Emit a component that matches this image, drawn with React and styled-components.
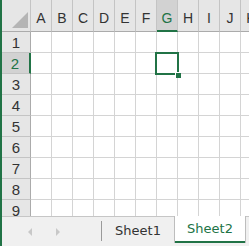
import React from "react";
import styled, { createGlobalStyle } from "styled-components";

const GREEN = "#217346";
const COLS = ["A", "B", "C", "D", "E", "F", "G", "H", "I", "J", "K"];
const ROWS = [1, 2, 3, 4, 5, 6, 7, 8, 9];
const SEL = { col: "G", row: 2 };

const GlobalStyle = createGlobalStyle`
  html, body {
    margin: 0;
    padding: 0;
    background: #fff;
  }
  body {
    font-family: "Liberation Sans", Arial, sans-serif;
  }
`;

const Window = styled.div`
  width: 249px;
  height: 246px;
  display: flex;
  flex-direction: column;
  border-left: 2px solid ${GREEN};
  box-sizing: border-box;
  overflow: hidden;
  background: #fff;
`;

const Grid = styled.div`
  flex: 1;
  min-height: 0;
  overflow: hidden;
  display: grid;
  grid-template-columns: 29px repeat(11, 21px);
  grid-template-rows: 32px repeat(9, 21px);
`;

const Corner = styled.div`
  box-sizing: border-box;
  background: #e6e6e6;
  border-right: 1px solid #c4c4c4;
  border-bottom: 1px solid #ababab;
  display: flex;
  align-items: flex-end;
  justify-content: flex-end;
  padding: 0 2px 3px 0;
`;

const CornerMark = styled.div`
  width: 0;
  height: 0;
  border-left: 16px solid transparent;
  border-bottom: 16px solid #b5b5b5;
`;

const ColHead = styled.div`
  box-sizing: border-box;
  background: ${(p) => (p.$active ? "#d2d2d2" : "#e6e6e6")};
  border-right: 1px solid #c4c4c4;
  border-bottom: ${(p) => (p.$active ? `2px solid ${GREEN}` : "1px solid #ababab")};
  color: ${(p) => (p.$active ? GREEN : "#333")};
  font-size: 14px;
  display: flex;
  align-items: center;
  justify-content: center;
  padding-top: ${(p) => (p.$active ? "5px" : "4px")};
`;

const RowHead = styled.div`
  box-sizing: border-box;
  background: ${(p) => (p.$active ? "#d2d2d2" : "#e6e6e6")};
  border-right: ${(p) => (p.$active ? `2px solid ${GREEN}` : "1px solid #ababab")};
  border-bottom: 1px solid #c4c4c4;
  color: ${(p) => (p.$active ? GREEN : "#333")};
  font-size: 15px;
  display: flex;
  align-items: center;
  justify-content: center;
  padding-right: ${(p) => (p.$active ? "1px" : "0")};
`;

const Cell = styled.div`
  box-sizing: border-box;
  position: relative;
  border-right: 1px solid #d4d4d4;
  border-bottom: 1px solid #d4d4d4;

  ${(p) =>
    p.$selected &&
    `
    &::after {
      content: "";
      position: absolute;
      left: -2px;
      top: -1px;
      right: -2px;
      bottom: -2px;
      border: 2px solid ${GREEN};
      z-index: 2;
    }
    &::before {
      content: "";
      position: absolute;
      right: -4px;
      bottom: -5px;
      width: 5px;
      height: 5px;
      background: ${GREEN};
      border-left: 1px solid #fff;
      border-top: 1px solid #fff;
      z-index: 3;
    }
  `}
`;

const TabBar = styled.div`
  height: 30px;
  flex-shrink: 0;
  display: flex;
  background: #f0f0f0;
  border-top: 1px solid #c6c6c6;
  box-sizing: border-box;
  font-family: "DejaVu Sans", "Liberation Sans", sans-serif;
`;

const Nav = styled.div`
  width: 99px;
  display: flex;
  align-items: center;
  padding-left: 26px;
  gap: 24px;
  box-sizing: border-box;
`;

const Arrow = styled.span`
  width: 0;
  height: 0;
  border-top: 4px solid transparent;
  border-bottom: 4px solid transparent;
  ${(p) =>
    p.$dir === "left"
      ? "border-right: 4px solid #c8c8c8;"
      : "border-left: 4px solid #c8c8c8;"}
`;

const Divider = styled.div`
  width: 1px;
  height: 20px;
  align-self: center;
  background: #9a9a9a;
  margin-top: -2px;
`;

const Tab = styled.div`
  width: ${(p) => p.$w}px;
  box-sizing: border-box;
  display: flex;
  align-items: center;
  justify-content: center;
  font-size: 13px;
  padding-bottom: 3px;
  color: ${(p) => (p.$active ? GREEN : "#333")};
  ${(p) =>
    p.$active &&
    `
    background: #fff;
    margin-top: -1px;
    margin-bottom: 3px;
    border-left: 1px solid #bdbdbd;
    border-right: 1px solid #bdbdbd;
    box-shadow: inset 0 -2px 0 ${GREEN};
  `}
`;

export default function App() {
  return (
    <>
      <GlobalStyle />
      <Window>
        <Grid>
          <Corner>
            <CornerMark />
          </Corner>
          {COLS.map((c) => (
            <ColHead key={c} $active={c === SEL.col}>
              {c}
            </ColHead>
          ))}
          {ROWS.map((r) => (
            <React.Fragment key={r}>
              <RowHead $active={r === SEL.row}>{r}</RowHead>
              {COLS.map((c) => (
                <Cell key={c} $selected={r === SEL.row && c === SEL.col} />
              ))}
            </React.Fragment>
          ))}
        </Grid>
        <TabBar>
          <Nav>
            <Arrow $dir="left" />
            <Arrow $dir="right" />
          </Nav>
          <Divider />
          <Tab $w={72}>Sheet1</Tab>
          <Tab $w={72} $active>
            Sheet2
          </Tab>
        </TabBar>
      </Window>
    </>
  );
}
